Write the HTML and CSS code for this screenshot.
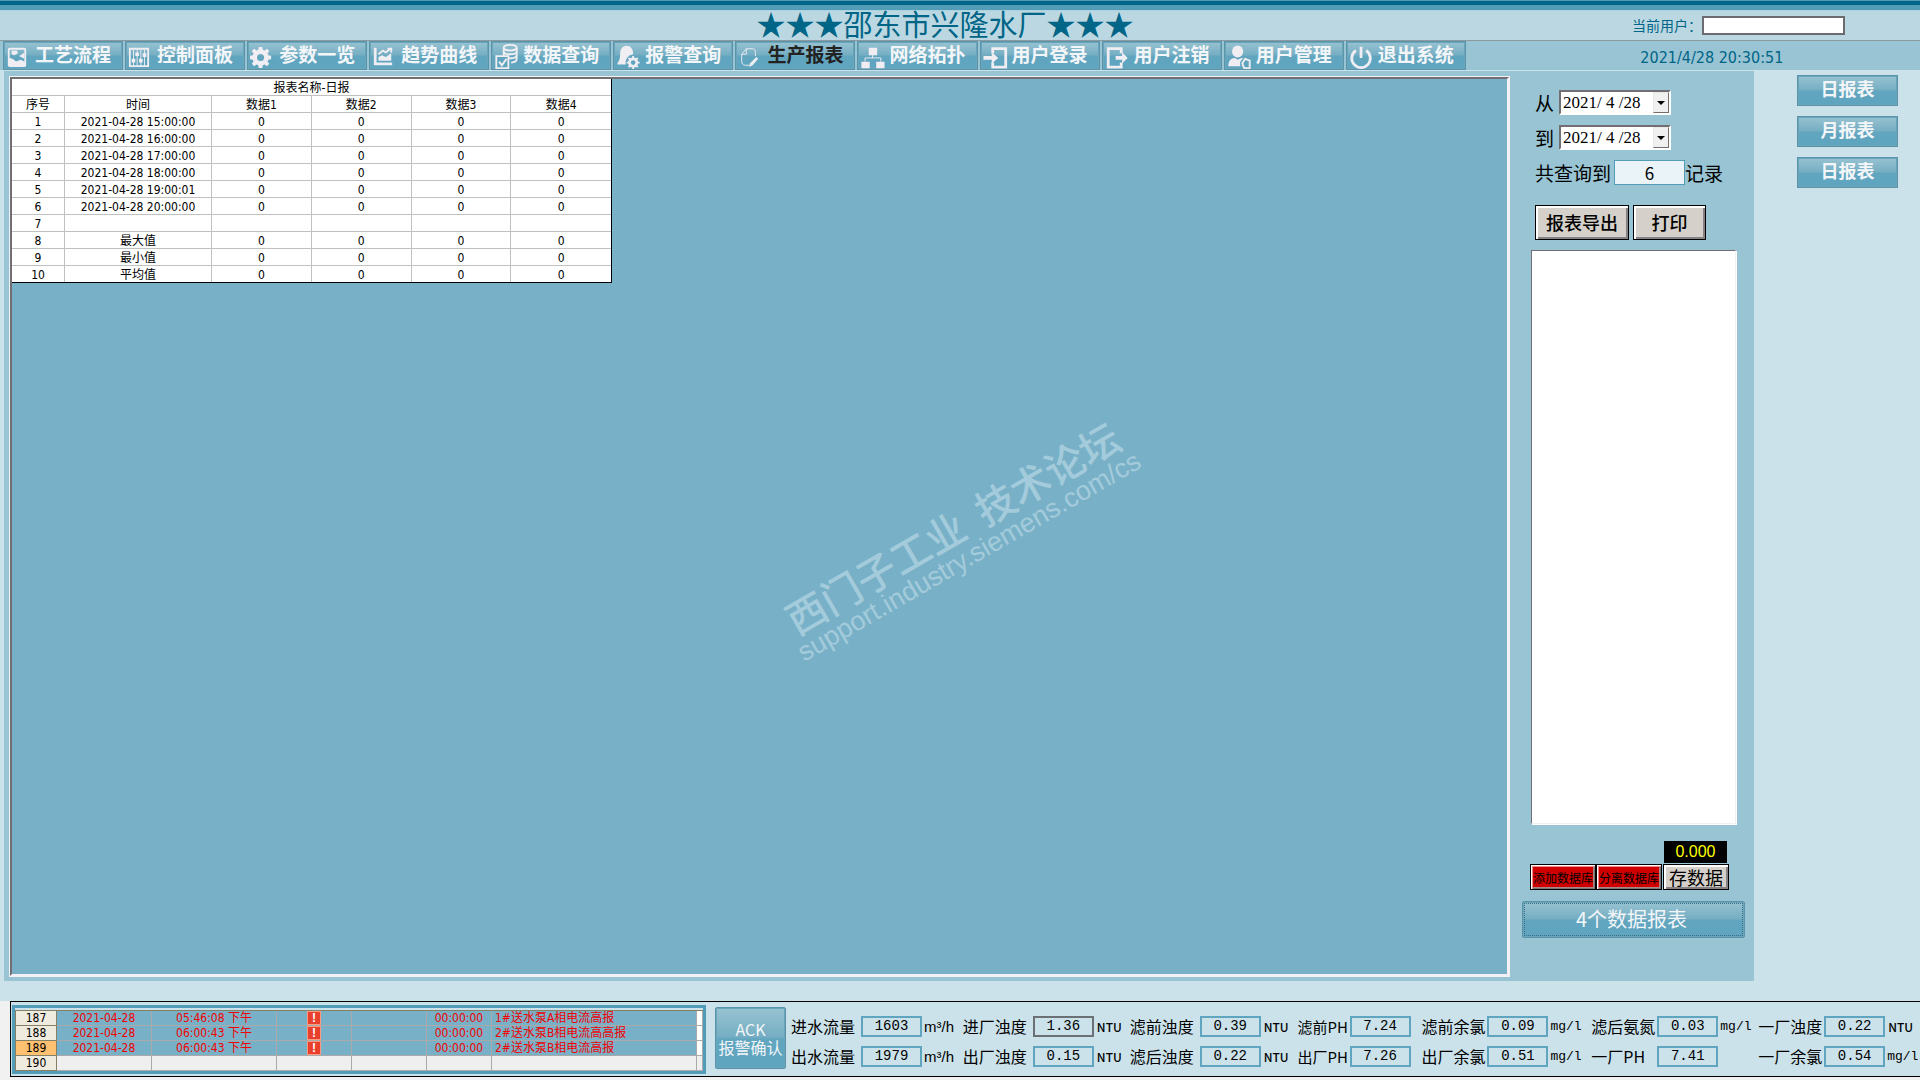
FILE: index.html
```html
<!DOCTYPE html>
<html lang="zh-CN">
<head>
<meta charset="utf-8">
<title>邵东市兴隆水厂 - 生产报表</title>
<link rel="stylesheet" href="styles.css">
</head>
<body>
<header class="header">
  <h1 class="title">★★★邵东市兴隆水厂★★★</h1>
  <div class="user">
    <label for="current-user">当前用户：</label>
    <input id="current-user" type="text" readonly>
  </div>
</header>

<div class="toolbar">
  <nav class="nav">
    <button type="button" class="btn nav-btn">
      <svg class="icon" viewBox="0 0 24 24"><path fill-rule="evenodd" d="M4 2h16a2 2 0 0 1 2 2v17a2 2 0 0 1-2 2H4a2 2 0 0 1-2-2V4a2 2 0 0 1 2-2zM4 4v9l3 1 4 3 5-2 4 2V4z"/><path d="M6 5h6l1 3-4 2-3-1zM20 7v7l-6-3 2-1z"/></svg>
      <span>工艺流程</span></button>
    <button type="button" class="btn nav-btn">
      <svg class="icon" viewBox="0 0 24 24"><path class="line" d="M2 3h20v19H2z"/><path class="line thin" d="M6 4v18M10 4v18M14 4v18M18 4v18"/><path d="M4 14h4v4H4zM8 7h4v4H8zM12 14h4v4h-4zM16 8h4v4h-4z"/></svg>
      <span>控制面板</span></button>
    <button type="button" class="btn nav-btn">
      <svg class="icon" viewBox="0 0 24 24"><path fill-rule="evenodd" d="M10 1h4l.6 3.200 2 .8 2.700-1.900 2.600 2.600L20 8.400l.8 2L24 11v4l-3.200.6-.8 2 1.900 2.700-2.600 2.600-2.700-1.900-2 .8L14 25h-4l-.6-3.200-2-.8-2.700 1.900-2.600-2.600L4 17.600l-.8-2L0 15v-4l3.200-.6.8-2-1.900-2.700 2.600-2.600L7.400 5l2-.8zM12 9a4 4 0 1 0 0 8 4 4 0 0 0 0-8z" transform="scale(.96)"/></svg>
      <span>参数一览</span></button>
    <button type="button" class="btn nav-btn">
      <svg class="icon" viewBox="0 0 24 24"><path d="M2 2h3v16h17v3H2z"/><path d="M7 16v-4l4-2 4 2 6-4v8z"/><path class="line" d="M7 9l5-4 3 2 5-4M17 3h4v4"/></svg>
      <span>趋势曲线</span></button>
    <button type="button" class="btn nav-btn">
      <svg class="icon big" viewBox="0 0 26 28"><ellipse class="line" cx="17" cy="4" rx="7" ry="3"/><path class="line" d="M10 4v4c0 4 14 4 14 0V4M10 8v4M14 15c5 1 10 0 10-3V8M18 20c4 0 6-1 6-4v-4M2 13h13v13H2zM5 19l3 4 5-7"/></svg>
      <span>数据查询</span></button>
    <button type="button" class="btn nav-btn">
      <svg class="icon big" viewBox="0 0 26 28"><path d="M11 2c5 0 7 4 7 9a9 9 0 0 0-8 11H1c0-3 3-3 3-11 0-5 2-9 7-9z"/><circle class="line thick" cx="18" cy="20" r="4"/><path class="line" d="M18 13v3M18 24v3M11 20h3M22 20h3M13 15l2 2M21 23l2 2M13 25l2-2M21 17l2-2"/></svg>
      <span>报警查询</span></button>
    <button type="button" class="btn nav-btn active">
      <svg class="icon" viewBox="0 0 24 24"><path class="line thin" d="M12 21H8c-3 0-4-2-4-5V9l5-6h7c2 0 3 1 3 4v4M9 3v6H4"/><path d="M20 12l2 2-6 7-4 2 1-4z"/></svg>
      <span>生产报表</span></button>
    <button type="button" class="btn nav-btn">
      <svg class="icon big" viewBox="0 0 26 28"><path d="M9 4h9v8H9zM1 19h9v7H1zM17 19h9v7h-9z"/><path class="line thin" d="M13 12v3M5 19v-4h17v4"/></svg>
      <span>网络拓扑</span></button>
    <button type="button" class="btn nav-btn">
      <svg class="icon big" viewBox="0 0 26 28"><path class="line thick" d="M10 10V5h14v20H10v-5"/><path d="M0 13h9V9l7 6-7 6v-4H0z"/></svg>
      <span>用户登录</span></button>
    <button type="button" class="btn nav-btn">
      <svg class="icon big" viewBox="0 0 26 28"><path class="line thick" d="M17 10V5H3v20h14v-5"/><path d="M11 13h7v-4l6 6-6 6v-4h-7z"/></svg>
      <span>用户注销</span></button>
    <button type="button" class="btn nav-btn">
      <svg class="icon big" viewBox="0 0 26 28"><ellipse cx="11" cy="8" rx="6" ry="6.500"/><path d="M1 24c0-6 3-9 7-9l3 2 4-2 2 1a6 6 0 0 0-3 8z"/><path class="line" d="M19 16l5 2v8h-6l-2-5z"/></svg>
      <span>用户管理</span></button>
    <button type="button" class="btn nav-btn">
      <svg class="icon big" viewBox="0 0 26 28"><path class="line thick" d="M7 7a10 10 0 1 0 11 0M12.500 3v12"/></svg>
      <span>退出系统</span></button>
  </nav>
  <time class="clock" datetime="2021-04-28T20:30:51">2021/4/28 20:30:51</time>
</div>

<main class="main">
  <section class="panel">
    <div class="canvas">
      <table class="report">
        <colgroup><col class="c-no"><col class="c-time"><col><col><col><col></colgroup>
        <thead>
          <tr><th colspan="6">报表名称-日报</th></tr>
          <tr><th>序号</th><th>时间</th><th>数据1</th><th>数据2</th><th>数据3</th><th>数据4</th></tr>
        </thead>
        <tbody>
          <tr><td>1</td><td>2021-04-28 15:00:00</td><td>0</td><td>0</td><td>0</td><td>0</td></tr>
          <tr><td>2</td><td>2021-04-28 16:00:00</td><td>0</td><td>0</td><td>0</td><td>0</td></tr>
          <tr><td>3</td><td>2021-04-28 17:00:00</td><td>0</td><td>0</td><td>0</td><td>0</td></tr>
          <tr><td>4</td><td>2021-04-28 18:00:00</td><td>0</td><td>0</td><td>0</td><td>0</td></tr>
          <tr><td>5</td><td>2021-04-28 19:00:01</td><td>0</td><td>0</td><td>0</td><td>0</td></tr>
          <tr><td>6</td><td>2021-04-28 20:00:00</td><td>0</td><td>0</td><td>0</td><td>0</td></tr>
          <tr><td>7</td><td></td><td></td><td></td><td></td><td></td></tr>
          <tr><td>8</td><td>最大值</td><td>0</td><td>0</td><td>0</td><td>0</td></tr>
          <tr><td>9</td><td>最小值</td><td>0</td><td>0</td><td>0</td><td>0</td></tr>
          <tr><td>10</td><td>平均值</td><td>0</td><td>0</td><td>0</td><td>0</td></tr>
        </tbody>
      </table>
    </div>
    <aside class="query">
      <div class="row date-row">
        <label for="from">从</label>
        <div class="date"><input id="from" type="text" value="2021/ 4 /28"><button type="button" aria-label="选择开始日期"></button></div>
      </div>
      <div class="row date-row">
        <label for="to">到</label>
        <div class="date"><input id="to" type="text" value="2021/ 4 /28"><button type="button" aria-label="选择结束日期"></button></div>
      </div>
      <div class="row count-row">
        <label for="count">共查询到</label><input id="count" type="text" value="6" readonly><span>记录</span>
      </div>
      <div class="row action-row">
        <button type="button" class="classic export">报表导出</button>
        <button type="button" class="classic print">打印</button>
      </div>
      <div class="list"></div>
      <output class="readout">0.000</output>
      <div class="db-row">
        <button type="button" class="classic red">添加数据库</button><button type="button" class="classic red">分离数据库</button><button type="button" class="classic save">存数据</button>
      </div>
      <button type="button" class="btn wide-btn"><span>4个数据报表</span></button>
    </aside>
  </section>
  <nav class="reports">
    <button type="button" class="btn">日报表</button>
    <button type="button" class="btn">月报表</button>
    <button type="button" class="btn">日报表</button>
  </nav>
</main>

<footer class="footer">
  <div class="alarms">
    <table>
      <colgroup><col class="a-no"><col class="a-date"><col class="a-time"><col class="a-icon"><col class="a-blank"><col class="a-dur"><col><col class="a-end"></colgroup>
      <tbody>
        <tr><th>187</th><td>2021-04-28</td><td>05:46:08 下午</td><td><i class="warn">!</i></td><td></td><td>00:00:00</td><td class="msg">1#送水泵A相电流高报</td><td class="end"></td></tr>
        <tr><th>188</th><td>2021-04-28</td><td>06:00:43 下午</td><td><i class="warn">!</i></td><td></td><td>00:00:00</td><td class="msg">2#送水泵B相电流高高报</td><td class="end"></td></tr>
        <tr class="current"><th>189</th><td>2021-04-28</td><td>06:00:43 下午</td><td><i class="warn">!</i></td><td></td><td>00:00:00</td><td class="msg">2#送水泵B相电流高报</td><td class="end"></td></tr>
        <tr class="empty"><th>190</th><td></td><td></td><td></td><td></td><td></td><td></td><td></td></tr>
      </tbody>
    </table>
  </div>
  <button type="button" class="btn ack"><span>ACK</span><span>报警确认</span></button>
  <div class="meters">
    <div class="meter"><label for="m1">进水流量</label><input id="m1" value="1603" readonly><span class="flow">m³/h</span></div>
    <div class="meter"><label for="m2">进厂浊度</label><input id="m2" class="marked" value="1.36" readonly><span>NTU</span></div>
    <div class="meter"><label for="m3">滤前浊度</label><input id="m3" value="0.39" readonly><span>NTU</span></div>
    <div class="meter short"><label for="m4">滤前PH</label><input id="m4" value="7.24" readonly></div>
    <div class="meter tight"><label for="m5">滤前余氯</label><input id="m5" value="0.09" readonly><span class="light">mg/l</span></div>
    <div class="meter tight"><label for="m6">滤后氨氮</label><input id="m6" value="0.03" readonly><span class="light">mg/l</span></div>
    <div class="meter tight"><label for="m7">一厂浊度</label><input id="m7" value="0.22" readonly><span>NTU</span></div>
    <div class="meter"><label for="m8">出水流量</label><input id="m8" value="1979" readonly><span class="flow">m³/h</span></div>
    <div class="meter"><label for="m9">出厂浊度</label><input id="m9" value="0.15" readonly><span>NTU</span></div>
    <div class="meter"><label for="m10">滤后浊度</label><input id="m10" value="0.22" readonly><span>NTU</span></div>
    <div class="meter short"><label for="m11">出厂PH</label><input id="m11" value="7.26" readonly></div>
    <div class="meter tight"><label for="m12">出厂余氯</label><input id="m12" value="0.51" readonly><span class="light">mg/l</span></div>
    <div class="meter tight"><label for="m13">一厂PH</label><input id="m13" value="7.41" readonly></div>
    <div class="meter tight"><label for="m14">一厂余氯</label><input id="m14" value="0.54" readonly><span class="light">mg/l</span></div>
  </div>
</footer>

<div class="watermark"><div><p class="wm-name">西门子工业  技术论坛</p><p class="wm-url">support.industry.siemens.com/cs</p></div></div>
</body>
</html>
```
FILE: styles.css
```css
* { box-sizing: border-box; }

body {
  margin: 0;
  min-height: 100vh;
  display: flex;
  flex-direction: column;
  position: relative;
  overflow-x: hidden;
  background: #f1f1f1;
  color: #000;
  font-family: "DejaVu Sans Condensed", "Noto Sans CJK SC", sans-serif;
  font-size: 12px;
}

button, input { font: inherit; margin: 0; padding: 0; border-radius: 0; }
h1, p { margin: 0; }

/* Header */
.header {
  display: grid;
  grid-template-columns: 1fr auto 1fr;
  align-items: center;
  height: 41px;
  padding: 10px 30px 0 0;
  border-bottom: 1px solid #8c9a9f;
  background:
    linear-gradient(#4f9bb6 1px, #006587 1px, #006587 5px, #529cb7 5px, #529cb7 10px, #a9d3df 10px, #a9d3df 11px, #bbd8e2 11px);
}
.title {
  grid-column: 2;
  align-self: start;
  color: #006587;
  font: 400 29px/26px "Noto Sans CJK SC", sans-serif;
}
.user {
  justify-self: end;
  display: flex;
  align-items: center;
  margin-right: 45px;
  color: #006587;
  font: 14px/19px "Noto Sans CJK SC", sans-serif;
}
.user input { width: 143px; height: 19px; border: 2px solid #6c6c70; background: #fff; }

.toolbar {
  display: flex;
  height: 30px;
  padding-left: 3px;
  border-bottom: 1px solid #cbe2ea;
  background: #98c4d3;
}
.nav { display: flex; gap: 2px; width: 76.3%; }
.btn {
  border: 1px solid #5994ab;
  background: linear-gradient(#98c3d1, #75aec3 48%, #61a5bf 52%, #5fa5bf);
  box-shadow: inset 0 0 0 1px #6aa5ba;
  color: #f3f6f9;
}
.nav-btn {
  flex: 1 1 0;
  display: flex;
  align-items: center;
  font: 700 19px/27px "Noto Sans CJK SC", sans-serif;
  white-space: nowrap;
}
.nav-btn span { line-height: 24px; padding-bottom: 3px; }
.nav-btn.active { color: #222; }
.icon { width: 22px; height: 22px; margin: 2px 7px 0 2px; flex: none; fill: #f0eef3; }
.icon.big { width: 25px; height: 26px; margin-right: 4px; }
.line { fill: none; stroke: #f0eef3; stroke-width: 2; }
.thick { stroke-width: 3; }
.thin { stroke-width: 1; }
.clock { flex: 1; padding-left: 38px; color: #006587; font-size: 16px; line-height: 34px; text-align: center; }

/* Work area */
.main { flex: 1; display: flex; padding: 0 0 20px 4px; background: #cbe2ea; }
.panel { flex: 1; display: flex; padding: 6px 0 5px 6px; background: #98c4d3; }
.canvas {
  flex: 1;
  border: 2px solid;
  border-color: #716f73 #f6f0f6 #f6f0f6 #716f73;
  box-shadow: 0 0 0 1px #f2f2f5;
  background: #78b1c7;
}
.report {
  width: 600px;
  table-layout: fixed;
  border-collapse: separate;
  border-spacing: 0;
  border-right: 1px solid #000;
  border-bottom: 1px solid #000;
  background: #fff;
  line-height: 14px;
  text-align: center;
}
.report th, .report td { height: 17px; padding: 2px 0 0; border: 0 solid #c0c0c0; border-width: 0 1px 1px 0; font-weight: 400; white-space: nowrap; }
.report tr > :last-child { border-right: 0; }
.report tbody tr:last-child td { height: 16px; border-bottom: 0; }
.c-no { width: 53px; }
.c-time { width: 147px; }

.query {
  width: 245px;
  display: flex;
  flex-direction: column;
  padding: 13px 9px 38px 13px;
  font-family: "Noto Sans CJK SC", sans-serif;
}
.row { display: flex; align-items: center; height: 25px; margin: 0 0 10px 13px; font-size: 19px; line-height: 25px; }
.date-row { gap: 5px; }
.date {
  display: flex;
  width: 112px;
  height: 25px;
  border: 2px solid;
  border-color: #716f73 #fff #fff #716f73;
  background: #fff;
}
.date input { flex: 1; min-width: 0; padding-left: 2px; border: 0; background: none; font: 17px/20px "Liberation Serif", serif; }
.date button { width: 16px; border: 1px solid; border-color: #e8e8e8 #707070 #707070 #e8e8e8; background: #f0f0f0; }
.date button::after { content: ""; display: block; width: 0; margin: 0 auto; border: 4px solid transparent; border-top-color: #000; border-bottom: 0; }
.count-row { margin-bottom: 20px; }
.count-row input { width: 71px; height: 25px; margin-left: 3px; border: 1px solid #529cb7; background: #eaf4f8; font: 17px/22px "Noto Sans CJK SC", sans-serif; text-align: center; }
.action-row { height: 35px; gap: 4px; }
.classic {
  border: 1px solid #000;
  background: #d5d0c9;
  box-shadow: inset 2px 2px #fff, inset -2px -2px #848284;
  color: #000;
  white-space: nowrap;
}
.export, .print { height: 35px; font-size: 18px; font-weight: 500; line-height: 29px; }
.export { width: 94px; }
.print { width: 73px; }
.list {
  flex: 1;
  margin: 0 9px 17px 9px;
  border: 1px solid;
  border-color: #716f73 #f0f0f0 #f0f0f0 #716f73;
  box-shadow: 1px 1px #fff;
  background: #fff;
}
.readout { align-self: flex-end; width: 63px; height: 22px; margin: 0 18px 1px 0; background: #000; color: #ff0; font: 16px/22px "Liberation Sans", sans-serif; text-align: center; }
.db-row { display: flex; margin: 0 0 11px 8px; }
.db-row button { width: 66px; height: 26px; overflow: hidden; }
.red { background: #d00000; font-size: 12px; box-shadow: inset 1px 1px #fff, inset 2px 2px #e88, inset -1px -1px #777, inset -2px -2px #a88; }
.db-row .save { margin-left: 1px; font-size: 18px; line-height: 20px; }
.wide-btn { height: 37px; padding: 1px; border-radius: 2px; font-size: 20px; line-height: 30px; }
.wide-btn span { display: block; height: 33px; padding-right: 4px; border: 1px dotted #3a6e82; }

.reports { width: 166px; display: flex; flex-direction: column; gap: 10px; padding: 4px 22px 0 43px; }
.reports .btn { height: 31px; font: 700 18px/25px "Noto Sans CJK SC", sans-serif; padding-bottom: 4px; }

/* Status strip */
.footer {
  display: flex;
  margin: 0 0 3px 10px;
  padding: 3px 0 2px 1px;
  border: 1px solid #000;
  border-right: 0;
  background: #cbe2ea;
}
.alarms { flex: none; width: 694px; padding-top: 2px; border: 3px solid #529cb7; }
.alarms table { width: 100%; table-layout: fixed; border-collapse: separate; border-spacing: 0; border-top: 1px solid #857f66; border-left: 1px solid #857f66; line-height: 14px; }
.alarms th, .alarms td { height: 15px; padding: 0; border: 0 solid #aaa; border-width: 0 1px 1px 0; font-weight: 400; white-space: nowrap; text-align: center; }
.alarms td { background: #78b1c7; color: #f00000; }
.alarms th { background: #efebde; border-color: #857f66; }
.alarms .msg { padding-left: 3px; text-align: left; }
.alarms .end { background: #fff; }
.alarms .empty td { background: #efefef; }
.alarms .current th { background: #ffc070; }
.a-no { width: 41px; }
.a-date { width: 95px; }
.a-time { width: 125px; }
.a-icon, .a-blank { width: 75px; }
.a-dur { width: 65px; }
.a-end { width: 6px; }
.warn { display: block; width: 14px; height: 14px; margin: 0 auto; border: 1px solid #ff9a80; background: #e8402c; color: #fff; font: 700 12px/12px "Liberation Sans", sans-serif; }

.ack { display: flex; flex-direction: column; justify-content: center; align-items: center; flex: none; width: 71px; height: 62px; margin: 2px 5px 0 9px; border-radius: 2px; font: 16px/18px "Noto Sans CJK SC", sans-serif; white-space: nowrap; }
.meters {
  flex: 1;
  display: grid;
  grid-template-columns: 172fr 167fr 168fr 124fr 170fr 167fr 162fr;
  grid-auto-rows: 21px;
  gap: 9px 0;
  padding-top: 11px;
}
.meter { display: flex; align-items: center; min-width: 0; white-space: nowrap; font: 14px/21px "Liberation Mono", monospace; }
.meter label { flex: none; width: 64px; margin-right: 6px; font: 16px/21px "Noto Sans CJK SC", sans-serif; }
.meter.tight label { margin-right: 2px; }
.meter.short label { width: 50px; margin-right: 2px; font-size: 15px; }
.meter input { flex: none; width: 61px; height: 21px; border: 2px solid #5fa5bf; background: none; text-align: center; }
.meter .marked { border-color: #6b7075; }
.meter span { margin-left: 3px; font: 500 12px/21px "Noto Sans CJK SC", sans-serif; }
.meter .flow { margin-left: 2px; font: 15px/21px "Liberation Sans", sans-serif; }
.meter .light { margin-left: 2px; font: 13px/21px "Liberation Mono", monospace; }

/* Watermark laid over the whole screen */
.watermark {
  position: absolute;
  inset: 0;
  display: grid;
  place-items: center;
  overflow: hidden;
  pointer-events: none;
  color: #a4cbdb;
  text-align: center;
  white-space: pre;
}
.watermark div { transform: rotate(-30deg); }
.wm-name { font: 500 40px/38px "Noto Sans CJK SC", sans-serif; }
.wm-url { font: 27px/30px "Liberation Sans", sans-serif; }
```
